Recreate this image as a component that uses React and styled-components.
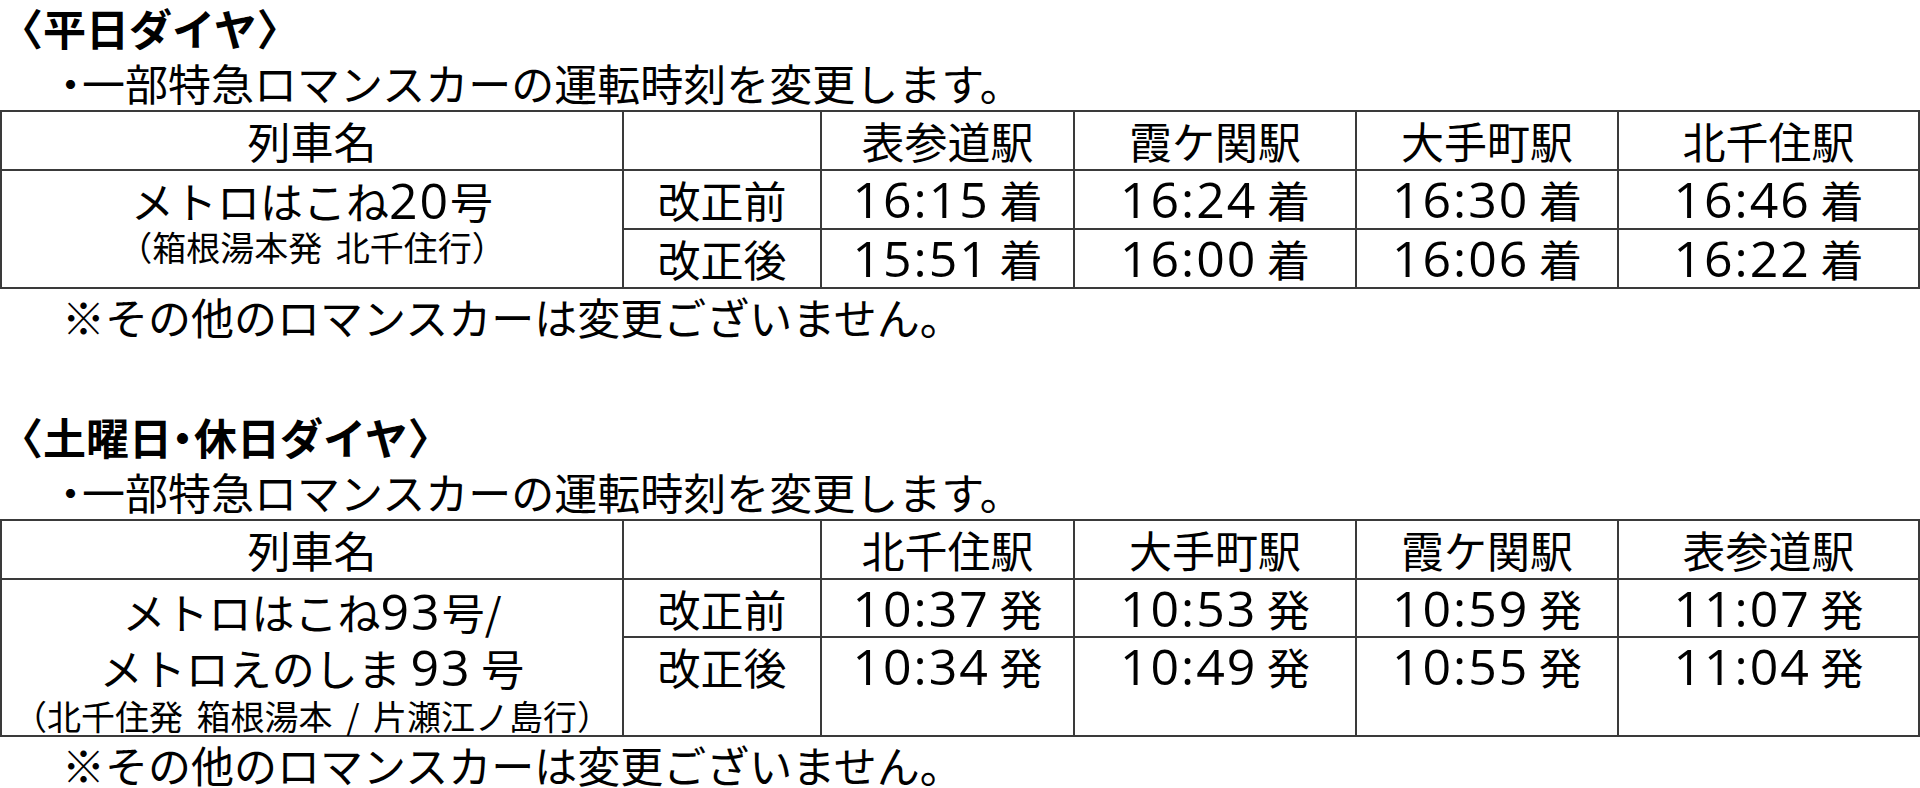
import React from "react";
import styled, { createGlobalStyle } from "styled-components";

const GlobalStyle = createGlobalStyle`
  html, body {
    margin: 0;
    padding: 0;
    background: #ffffff;
  }
  body {
    font-family: "Noto Sans CJK JP", "Noto Sans", sans-serif;
    color: #000000;
  }
`;

const Page = styled.div`
  width: 1920px;
  display: flex;
  flex-direction: column;
`;

const Section = styled.section`
  display: flex;
  flex-direction: column;
  & + & {
    margin-top: 66px;
  }
`;

const Title = styled.h2`
  margin: 0;
  font-size: 43px;
  font-weight: 700;
  height: 54px;
  line-height: 54px;
  white-space: nowrap;
`;

const Lead = styled.p`
  margin: 0;
  font-size: 43px;
  font-weight: 400;
  height: 56px;
  line-height: 56px;
  padding-left: 60px;
  white-space: nowrap;
`;

const Dot = styled.span`
  margin-left: -11px;
  letter-spacing: -10px;
`;

const Note = styled.p`
  margin: 0;
  font-size: 43px;
  height: 54px;
  line-height: 54px;
  padding-left: 62px;
  white-space: nowrap;
`;

const Table = styled.table`
  border-collapse: collapse;
  table-layout: fixed;
  width: 1918px;
`;

const Row = styled.tr`
  height: ${(p) => p.$h}px;
`;

const Cell = styled.td`
  border: 2px solid #3a3a3a;
  padding: 0;
  vertical-align: top;
  text-align: center;
  font-size: 43px;
  line-height: 56px;
  white-space: nowrap;
`;

const NameLine = styled.div`
  font-size: 43px;
  line-height: ${(p) => p.$lh}px;
`;

const NameNote = styled.div`
  font-size: 34px;
  line-height: 36px;
  margin-top: ${(p) => p.$mt || 0}px;
  word-spacing: 6px;
`;

const Num = styled.span`
  font-family: "Open Sans", "Noto Sans", sans-serif;
  font-weight: 400;
  font-size: 50px;
  line-height: 1;
  letter-spacing: 2px;
`;

const COLS = [622, 198, 253, 282, 262, 301];

const sections = [
  {
    title: "〈平日ダイヤ〉",
    heights: [59, 59, 59],
    stations: ["表参道駅", "霞ケ関駅", "大手町駅", "北千住駅"],
    before: ["16:15", "16:24", "16:30", "16:46"],
    after: ["15:51", "16:00", "16:06", "16:22"],
    suffix: "着",
    name: (
      <>
        <NameLine $lh={58}>
          メトロはこね<Num>20</Num>号
        </NameLine>
        <NameNote>（箱根湯本発 北千住行）</NameNote>
      </>
    ),
  },
  {
    title: (
      <>
        〈土曜日<Dot>・</Dot>休日ダイヤ〉
      </>
    ),
    heights: [59, 58, 99],
    stations: ["北千住駅", "大手町駅", "霞ケ関駅", "表参道駅"],
    before: ["10:37", "10:53", "10:59", "11:07"],
    after: ["10:34", "10:49", "10:55", "11:04"],
    suffix: "発",
    name: (
      <>
        <NameLine $lh={62}>
          メトロはこね<Num>93</Num>号/
        </NameLine>
        <NameLine $lh={44}>
          メトロえのしま <Num>93</Num> 号
        </NameLine>
        <NameNote $mt={6}>（北千住発 箱根湯本 / 片瀬江ノ島行）</NameNote>
      </>
    ),
  },
];

function TimeTable({ s }) {
  return (
    <Table>
      <colgroup>
        {COLS.map((w, i) => (
          <col key={i} style={{ width: w }} />
        ))}
      </colgroup>
      <tbody>
        <Row $h={s.heights[0]}>
          <Cell>列車名</Cell>
          <Cell />
          {s.stations.map((st) => (
            <Cell key={st}>{st}</Cell>
          ))}
        </Row>
        <Row $h={s.heights[1]}>
          <Cell rowSpan={2}>{s.name}</Cell>
          <Cell>改正前</Cell>
          {s.before.map((t) => (
            <Cell key={t}>
              <Num>{t}</Num> {s.suffix}
            </Cell>
          ))}
        </Row>
        <Row $h={s.heights[2]}>
          <Cell>改正後</Cell>
          {s.after.map((t) => (
            <Cell key={t}>
              <Num>{t}</Num> {s.suffix}
            </Cell>
          ))}
        </Row>
      </tbody>
    </Table>
  );
}

export default function App() {
  return (
    <Page>
      <GlobalStyle />
      {sections.map((s, i) => (
        <Section key={i}>
          <Title>{s.title}</Title>
          <Lead>
            <Dot>・</Dot>一部特急ロマンスカーの運転時刻を変更します。
          </Lead>
          <TimeTable s={s} />
          <Note>※その他のロマンスカーは変更ございません。</Note>
        </Section>
      ))}
    </Page>
  );
}
